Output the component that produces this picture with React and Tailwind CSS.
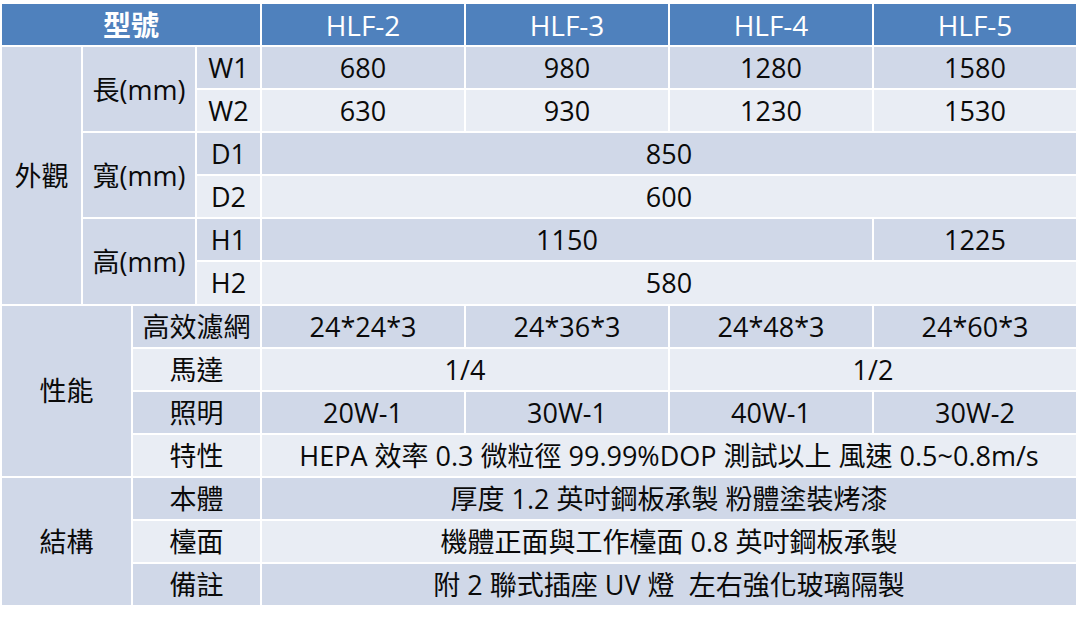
import React from "react";

// 規格表 — HLF series spec sheet
const DARK = "bg-[#d0d8e8]";
const LIGHT = "bg-[#e9edf4]";

function C({ className = "", children }) {
  return (
    <div className={`flex items-center justify-center whitespace-pre text-[27px] leading-none text-[#0a0a0a] ${className}`}>
      {children}
    </div>
  );
}

function H({ className = "", children }) {
  return (
    <div className={`flex items-center justify-center bg-[#4f81bd] text-[28px] leading-none text-white ${className}`}>
      {children}
    </div>
  );
}

export default function App() {
  return (
    <div
      className="w-[1080px] h-[617px] bg-white pt-[4px] pl-[2px]"
      style={{ fontFamily: '"Open Sans", "Noto Sans CJK TC", sans-serif' }}
    >
      <div className="grid h-[601px] w-[1074px] grid-cols-[79px_48px_62px_63px_repeat(4,202px)] grid-rows-[repeat(14,minmax(0,1fr))] gap-[2px]">
        {/* header */}
        <H className="col-span-4 font-bold">型號</H>
        <H>HLF-2</H>
        <H>HLF-3</H>
        <H>HLF-4</H>
        <H>HLF-5</H>

        {/* 外觀 */}
        <C className={`col-start-1 row-start-2 row-span-6 ${DARK}`}>外觀</C>
        <C className={`col-start-2 col-span-2 row-start-2 row-span-2 ${DARK}`}>長(mm)</C>
        <C className={`col-start-4 row-start-2 ${DARK}`}>W1</C>
        <C className={`row-start-2 ${DARK}`}>680</C>
        <C className={`row-start-2 ${DARK}`}>980</C>
        <C className={`row-start-2 ${DARK}`}>1280</C>
        <C className={`row-start-2 ${DARK}`}>1580</C>
        <C className={`col-start-4 row-start-3 ${LIGHT}`}>W2</C>
        <C className={`row-start-3 ${LIGHT}`}>630</C>
        <C className={`row-start-3 ${LIGHT}`}>930</C>
        <C className={`row-start-3 ${LIGHT}`}>1230</C>
        <C className={`row-start-3 ${LIGHT}`}>1530</C>

        <C className={`col-start-2 col-span-2 row-start-4 row-span-2 ${DARK}`}>寬(mm)</C>
        <C className={`col-start-4 row-start-4 ${DARK}`}>D1</C>
        <C className={`row-start-4 col-span-4 ${DARK}`}>850</C>
        <C className={`col-start-4 row-start-5 ${LIGHT}`}>D2</C>
        <C className={`row-start-5 col-span-4 ${LIGHT}`}>600</C>

        <C className={`col-start-2 col-span-2 row-start-6 row-span-2 ${DARK}`}>高(mm)</C>
        <C className={`col-start-4 row-start-6 ${DARK}`}>H1</C>
        <C className={`row-start-6 col-span-3 ${DARK}`}>1150</C>
        <C className={`row-start-6 ${DARK}`}>1225</C>
        <C className={`col-start-4 row-start-7 ${LIGHT}`}>H2</C>
        <C className={`row-start-7 col-span-4 ${LIGHT}`}>580</C>

        {/* 性能 */}
        <C className={`col-start-1 col-span-2 row-start-8 row-span-4 ${DARK}`}>性能</C>
        <C className={`col-start-3 col-span-2 row-start-8 ${DARK}`}>高效濾網</C>
        <C className={`row-start-8 ${DARK}`}>24*24*3</C>
        <C className={`row-start-8 ${DARK}`}>24*36*3</C>
        <C className={`row-start-8 ${DARK}`}>24*48*3</C>
        <C className={`row-start-8 ${DARK}`}>24*60*3</C>
        <C className={`col-start-3 col-span-2 row-start-9 ${LIGHT}`}>馬達</C>
        <C className={`row-start-9 col-span-2 ${LIGHT}`}>1/4</C>
        <C className={`row-start-9 col-span-2 ${LIGHT}`}>1/2</C>
        <C className={`col-start-3 col-span-2 row-start-10 ${DARK}`}>照明</C>
        <C className={`row-start-10 ${DARK}`}>20W-1</C>
        <C className={`row-start-10 ${DARK}`}>30W-1</C>
        <C className={`row-start-10 ${DARK}`}>40W-1</C>
        <C className={`row-start-10 ${DARK}`}>30W-2</C>
        <C className={`col-start-3 col-span-2 row-start-11 ${LIGHT}`}>特性</C>
        <C className={`row-start-11 col-span-4 ${LIGHT}`}>HEPA 效率 0.3 微粒徑 99.99%DOP 測試以上 風速 0.5~0.8m/s</C>

        {/* 結構 */}
        <C className={`col-start-1 col-span-2 row-start-12 row-span-3 ${DARK}`}>結構</C>
        <C className={`col-start-3 col-span-2 row-start-12 ${DARK}`}>本體</C>
        <C className={`row-start-12 col-span-4 ${DARK}`}>厚度 1.2 英吋鋼板承製 粉體塗裝烤漆</C>
        <C className={`col-start-3 col-span-2 row-start-13 ${LIGHT}`}>檯面</C>
        <C className={`row-start-13 col-span-4 ${LIGHT}`}>機體正面與工作檯面 0.8 英吋鋼板承製</C>
        <C className={`col-start-3 col-span-2 row-start-14 ${DARK}`}>備註</C>
        <C className={`row-start-14 col-span-4 ${DARK}`}>附 2 聯式插座 UV 燈  左右強化玻璃隔製</C>
      </div>
    </div>
  );
}
